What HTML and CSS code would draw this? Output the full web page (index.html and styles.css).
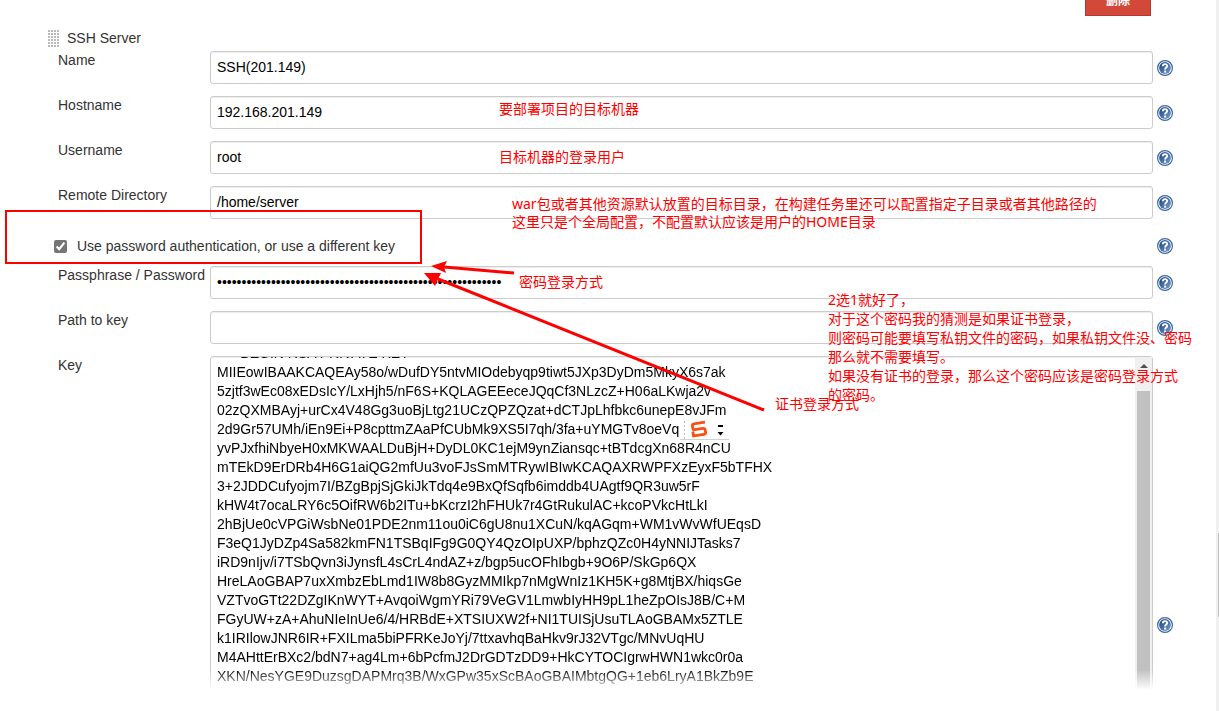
FILE: index.html
```html
<!DOCTYPE html>
<html lang="zh-CN">
<head>
<meta charset="utf-8">
<title>SSH Server</title>
<link rel="stylesheet" href="styles.css">
</head>
<body>
<svg class="defs" aria-hidden="true">
  <defs>
    <linearGradient id="ball" x1="0" y1="0" x2="1" y2="1">
      <stop offset="0" stop-color="#15407f"/>
      <stop offset="1" stop-color="#7d9fcb"/>
    </linearGradient>
    <symbol id="help" viewBox="0 0 16 16">
      <circle cx="8" cy="8" r="7.4" fill="#fff" stroke="#3c689f" stroke-width="1.2"/>
      <circle cx="8" cy="8" r="5.9" fill="url(#ball)"/>
      <path d="M5.8 6.3C5.8 3.4 10.3 3.5 10.2 6.1C10.1 7.6 8.1 7.6 8.1 9.5" fill="none" stroke="#fff" stroke-width="1.9"/>
      <rect x="7.1" y="10.6" width="2" height="2" fill="#fff"/>
    </symbol>
  </defs>
</svg>
<div class="page">
  <main class="content">
    <div class="toolbar"><button class="delete" type="button">删除</button></div>
    <h2 class="section"><span class="handle"></span>SSH Server</h2>
    <form class="fields">
      <div class="row">
        <label for="name">Name</label>
        <input class="text" id="name" type="text" value="SSH(201.149)">
        <button class="help" type="button" aria-label="Help"><svg><use href="#help"/></svg></button>
      </div>
      <div class="row">
        <label for="host">Hostname</label>
        <input class="text" id="host" type="text" value="192.168.201.149">
        <button class="help" type="button" aria-label="Help"><svg><use href="#help"/></svg></button>
      </div>
      <div class="row">
        <label for="user">Username</label>
        <input class="text" id="user" type="text" value="root">
        <button class="help" type="button" aria-label="Help"><svg><use href="#help"/></svg></button>
      </div>
      <div class="row">
        <label for="dir">Remote Directory</label>
        <input class="text" id="dir" type="text" value="/home/server">
        <button class="help" type="button" aria-label="Help"><svg><use href="#help"/></svg></button>
      </div>
      <div class="row row-check">
        <div class="check">
          <input id="usepw" type="checkbox" checked>
          <label for="usepw">Use password authentication, or use a different key</label>
        </div>
        <button class="help" type="button" aria-label="Help"><svg><use href="#help"/></svg></button>
      </div>
      <div class="row">
        <label for="pass">Passphrase / Password</label>
        <input class="text" id="pass" type="password" value="0000000000000000000000000000000000000000000000000000000000">
        <button class="help" type="button" aria-label="Help"><svg><use href="#help"/></svg></button>
      </div>
      <div class="row">
        <label for="path">Path to key</label>
        <input class="text" id="path" type="text" value="">
        <button class="help" type="button" aria-label="Help"><svg><use href="#help"/></svg></button>
      </div>
      <div class="row row-key">
        <label for="key">Key</label>
        <div class="keybox">
          <textarea class="text" id="key" rows="17" wrap="off" spellcheck="false">-----BEGIN RSA PRIVATE KEY-----
MIIEowIBAAKCAQEAy58o/wDufDY5ntvMIOdebyqp9tiwt5JXp3DyDm5MkyX6s7ak
5zjtf3wEc08xEDsIcY/LxHjh5/nF6S+KQLAGEEeceJQqCf3NLzcZ+H06aLKwja2v
02zQXMBAyj+urCx4V48Gg3uoBjLtg21UCzQPZQzat+dCTJpLhfbkc6unepE8vJFm
2d9Gr57UMh/iEn9Ei+P8cpttmZAaPfCUbMk9XS5I7qh/3fa+uYMGTv8oeVq
yvPJxfhiNbyeH0xMKWAALDuBjH+DyDL0KC1ejM9ynZiansqc+tBTdcgXn68R4nCU
mTEkD9ErDRb4H6G1aiQG2mfUu3voFJsSmMTRywIBIwKCAQAXRWPFXzEyxF5bTFHX
3+2JDDCufyojm7I/BZgBpjSjGkiJkTdq4e9BxQfSqfb6imddb4UAgtf9QR3uw5rF
kHW4t7ocaLRY6c5OifRW6b2ITu+bKcrzI2hFHUk7r4GtRukulAC+kcoPVkcHtLkI
2hBjUe0cVPGiWsbNe01PDE2nm11ou0iC6gU8nu1XCuN/kqAGqm+WM1vWvWfUEqsD
F3eQ1JyDZp4Sa582kmFN1TSBqIFg9G0QY4QzOIpUXP/bphzQZc0H4yNNIJTasks7
iRD9nIjv/i7TSbQvn3iJynsfL4sCrL4ndAZ+z/bgp5ucOFhIbgb+9O6P/SkGp6QX
HreLAoGBAP7uxXmbzEbLmd1IW8b8GyzMMIkp7nMgWnIz1KH5K+g8MtjBX/hiqsGe
VZTvoGTt22DZgIKnWYT+AvqoiWgmYRi79VeGV1LmwbIyHH9pL1heZpOIsJ8B/C+M
FGyUW+zA+AhuNIeInUe6/4/HRBdE+XTSIUXW2f+NI1TUISjUsuTLAoGBAMx5ZTLE
k1IRIlowJNR6IR+FXILma5biPFRKeJoYj/7ttxavhqBaHkv9rJ32VTgc/MNvUqHU
M4AHttErBXc2/bdN7+ag4Lm+6bPcfmJ2DrGDTzDD9+HkCYTOCIgrwHWN1wkc0r0a
XKN/NesYGE9DuzsgDAPMrq3B/WxGPw35xScBAoGBAIMbtgQG+1eb6LryA1BkZb9E</textarea>
          <div class="keybar"><span class="keybar-up"></span><span class="keybar-thumb"></span></div>
        </div>
        <button class="help" type="button" aria-label="Help"><svg><use href="#help"/></svg></button>
      </div>
    </form>
  </main>
  <div class="pagebar"><span class="pagebar-thumb"></span></div>
</div>

<div class="ime">
  <svg viewBox="0 0 49 21">
    <path d="M4.5 1V19" stroke="#bbb" stroke-dasharray="2 2"/>
    <path transform="rotate(-9 19 9)" d="M26 3.2H14.5Q13 3.2 13 5V7.5Q13 9 14.5 9H23Q25 9 25 11V13.3Q25 15 23 15H12.5V10.5" fill="none" stroke="#fa5014" stroke-width="2.8"/>
    <rect x="38" y="5" width="5" height="2"/>
    <path d="M37.5 12H43.5L40.5 15.5Z"/>
    <path d="M0 19.5H49" stroke="#d2d2d2"/>
  </svg>
</div>
<div class="frame"></div>
<svg class="arrows" viewBox="0 0 360 160" aria-hidden="true">
  <path d="M94 13L24 7M344 150L18 19" fill="none" stroke="#f00" stroke-width="3"/>
  <path d="M11 6L27 1L24 7L26 13ZM4 13L21 13L18 19L15 26Z" fill="#f00"/>
</svg>
<p class="note note-host">要部署项目的目标机器</p>
<p class="note note-user">目标机器的登录用户</p>
<p class="note note-dir">war包或者其他资源默认放置的目标目录，在构建任务里还可以配置指定子目录或者其他路径的<br>这里只是个全局配置，不配置默认应该是用户的HOME目录</p>
<p class="note note-pass">密码登录方式</p>
<p class="note note-cert">证书登录方式</p>
<p class="note note-long">2选1就好了，<br>对于这个密码我的猜测是如果证书登录，<br>则密码可能要填写私钥文件的密码，如果私钥文件没、密码<br>那么就不需要填写。<br>如果没有证书的登录，那么这个密码应该是密码登录方式<br>的密码。</p>
<script src="main.js"></script>
</body>
</html>
```
FILE: styles.css
```css
* { box-sizing: border-box; }

body {
  margin: 0;
  overflow: hidden;
  background: #fff;
  color: #333;
  font: 14px/18px "Liberation Sans", Arial, "Noto Sans CJK SC", sans-serif;
}

.defs { position: absolute; width: 0; height: 0; }

.page { display: flex; min-height: 100vh; }
.content { flex: 1; min-width: 0; padding: 0 43px 0 48px; }

.toolbar { display: flex; justify-content: flex-end; padding-right: 22px; }
.delete {
  width: 66px;
  height: 32px;
  margin-top: -16px;
  padding: 0;
  border: 1px solid #b33630;
  background: #d24939;
  color: #fff;
  font: bold 12px/16px "Noto Sans CJK SC", sans-serif;
}

.section {
  display: flex;
  align-items: center;
  gap: 8px;
  margin: 13px 0 4px;
  font-size: 14px;
  font-weight: normal;
}
.handle {
  width: 11px;
  height: 17px;
  background: radial-gradient(circle at 1px 1px, #bbb 1px, transparent 1px) 0 0 / 3px 3px;
}

.fields { display: flex; flex-direction: column; gap: 12px; padding-left: 10px; }
.row {
  display: grid;
  grid-template-columns: 148px 1fr 16px;
  gap: 4px;
  align-items: center;
}
.row > label { align-self: start; white-space: nowrap; }

.text {
  display: block;
  width: 100%;
  height: 33px;
  margin: 0;
  padding: 5px 6px 7px;
  border: 1px solid #ccc;
  border-radius: 3px;
  outline: 0;
  background: #fff;
  box-shadow: inset 0 1px 1px rgba(0, 0, 0, 0.075);
  color: #000;
  font: 14px/19px "Liberation Sans", Arial, sans-serif;
}

.help { width: 16px; height: 16px; padding: 0; border: 0; background: none; }
.help svg { display: block; width: 16px; height: 16px; }

.row-check { height: 23px; padding-top: 6px; }
.check {
  grid-column: 1 / 3;
  display: flex;
  align-items: center;
  gap: 10px;
  margin-left: -4px;
}
.check input { width: 13px; height: 13px; margin: 0; accent-color: #767676; }

.keybox {
  position: relative;
  mask-image: linear-gradient(#000 calc(100% - 20px), transparent);
}
.keybox .text { height: 334px; padding: 6px; overflow: hidden; resize: none; white-space: pre; }
.keybar {
  position: absolute;
  top: 1px;
  right: 1px;
  bottom: 0;
  display: flex;
  flex-direction: column;
  align-items: center;
  width: 17px;
  background: #f0f0f0;
}
.keybar-up {
  margin: 7px 0 23px;
  border: 4px solid transparent;
  border-top: 0;
  border-bottom-color: #505050;
}
.keybar-thumb { flex: 1; width: 13px; background: #c1c1c1; }
.row-key .help { align-self: end; margin-bottom: 57px; }

.pagebar { width: 3px; padding: 533px 0 0 2px; background: #f0f0f0; }
.pagebar-thumb { display: block; height: 84px; background: #c1c1c1; }

/* Annotations lie freely over the form. */
.ime { position: absolute; left: 680px; top: 420px; width: 49px; height: 21px; background: #fff; }
.ime svg { display: block; width: 49px; height: 21px; }
.frame {
  position: absolute;
  left: 5px;
  top: 210px;
  width: 417px;
  height: 54px;
  border: 2px solid #f00;
  pointer-events: none;
}
.arrows { position: absolute; left: 420px; top: 260px; width: 360px; height: 160px; pointer-events: none; }
.note {
  position: absolute;
  margin: 0;
  color: #f00;
  font: 14px/18px "Noto Sans", "Noto Sans CJK SC", sans-serif;
  white-space: nowrap;
  pointer-events: none;
}
.note-host { left: 499px; top: 100px; }
.note-user { left: 499px; top: 148px; }
.note-dir { left: 512px; top: 195px; }
.note-pass { left: 519px; top: 273px; }
.note-cert { left: 775px; top: 395px; }
.note-long { left: 828px; top: 290px; line-height: 19px; }
```
FILE: main.js
```js
// Open the key one line down, past its header.
document.getElementById('key').scrollTop = 19;
```
